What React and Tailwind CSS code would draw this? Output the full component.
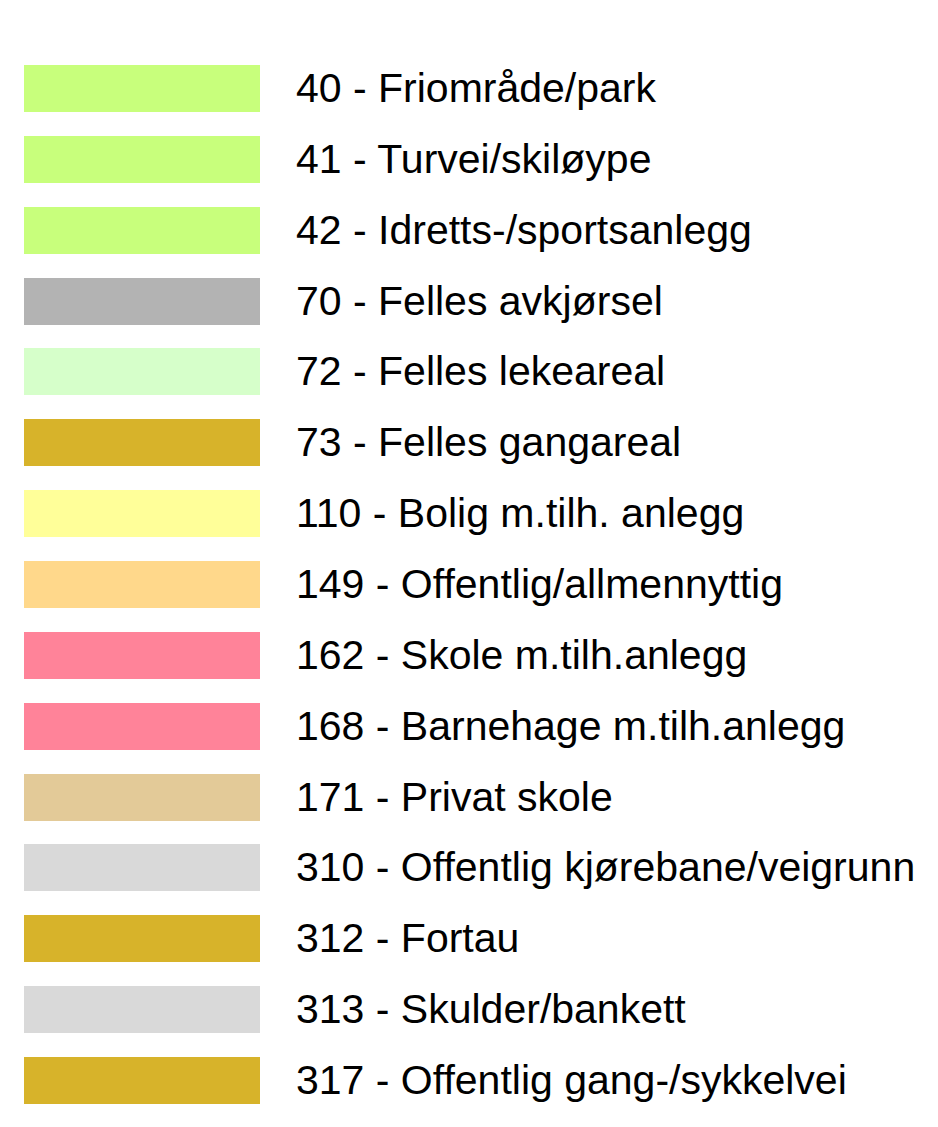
const items = [
  { code: "40", label: "Friområde/park", color: "bg-[#c8ff7c]" },
  { code: "41", label: "Turvei/skiløype", color: "bg-[#c8ff7c]" },
  { code: "42", label: "Idretts-/sportsanlegg", color: "bg-[#c8ff7c]" },
  { code: "70", label: "Felles avkjørsel", color: "bg-[#b3b3b3]" },
  { code: "72", label: "Felles lekeareal", color: "bg-[#d6ffca]" },
  { code: "73", label: "Felles gangareal", color: "bg-[#d7b32a]" },
  { code: "110", label: "Bolig m.tilh. anlegg", color: "bg-[#ffff99]" },
  { code: "149", label: "Offentlig/allmennyttig", color: "bg-[#ffd88b]" },
  { code: "162", label: "Skole m.tilh.anlegg", color: "bg-[#ff8399]" },
  { code: "168", label: "Barnehage m.tilh.anlegg", color: "bg-[#ff8399]" },
  { code: "171", label: "Privat skole", color: "bg-[#e3ca98]" },
  { code: "310", label: "Offentlig kjørebane/veigrunn", color: "bg-[#d9d9d9]" },
  { code: "312", label: "Fortau", color: "bg-[#d7b32a]" },
  { code: "313", label: "Skulder/bankett", color: "bg-[#d9d9d9]" },
  { code: "317", label: "Offentlig gang-/sykkelvei", color: "bg-[#d7b32a]" },
]

const App = () => {
  return (
    <div className="w-[938px] h-[1127px] bg-white overflow-hidden font-['Liberation_Sans',Arial,sans-serif] text-black">
      <div className="flex flex-col gap-[23.86px] pt-[65px] pl-[24px]">
        {items.map(item => (
          <div key={item.code} className="flex items-center gap-[36px]">
            <div className={`w-[236px] h-[47px] shrink-0 ${item.color}`}></div>
            <span className="text-[41px] leading-[47px] whitespace-nowrap">
              {item.code} - {item.label}
            </span>
          </div>
        ))}
      </div>
    </div>
  )
}

export default App;
